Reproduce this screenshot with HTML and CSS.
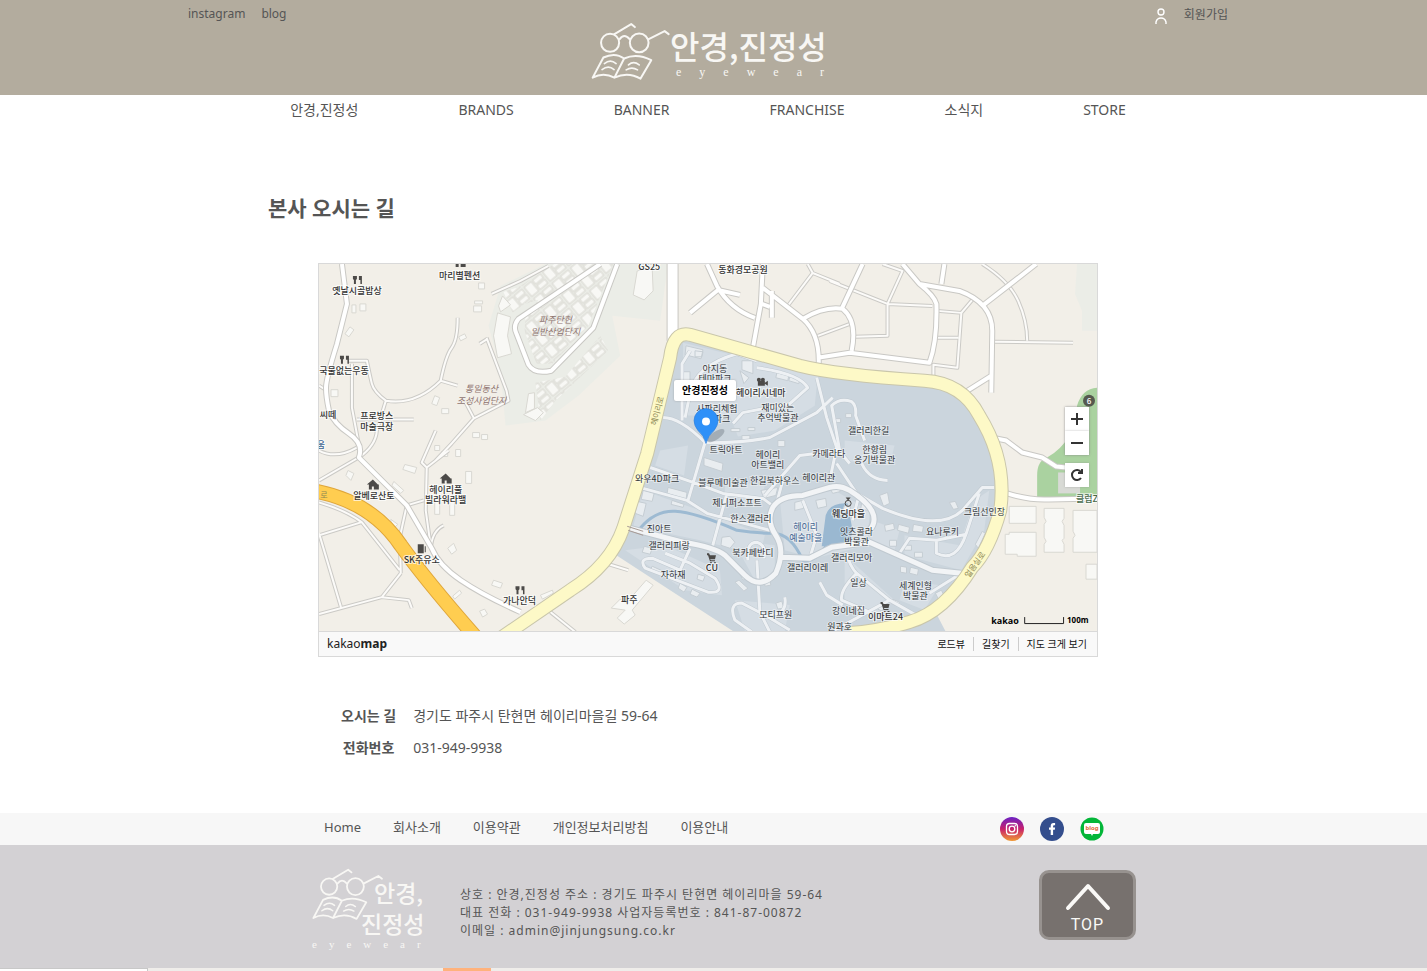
FILE: index.html
```html
<!DOCTYPE html>
<html lang="ko">
<head>
<meta charset="utf-8">
<meta name="viewport" content="width=device-width, initial-scale=1">
<title>안경,진정성 - 본사 오시는 길</title>
<link rel="stylesheet" href="styles.css">
</head>
<body>
<svg class="defs" aria-hidden="true">
  <symbol id="book-glasses" viewBox="90 60 245 185">
    <g fill="none" stroke="#f8f7f4" stroke-width="6" stroke-linecap="round" stroke-linejoin="round">
      <circle cx="150" cy="128" r="27"/><circle cx="237" cy="128" r="28"/>
      <path d="M178 118Q192 98 209 118M163 102 213 72 224 81M264 118 313 93 325 102"/>
      <path d="M98 232 130 172Q165 155 192 175Q230 158 273 180L241 235Q203 213 163 232Q130 215 98 232ZM192 175 163 232"/>
      <path stroke-width="5" d="M133 190Q151 176 168 190M126 208Q145 194 162 208M205 194Q220 181 237 194M198 209Q215 198 232 209"/>
    </g>
  </symbol>
</svg>

<header class="site-header">
  <div class="wrap header-row">
    <div class="top-links"><a href="#">instagram</a><a href="#">blog</a></div>
    <a class="logo" href="#" aria-label="안경, 진정성 eyewear">
      <svg width="236" height="62" viewBox="590 20 236 62">
        <use href="#book-glasses" x="590" y="20" width="82" height="62"/>
        <text class="logo-name" x="670" y="59">안경,진정성</text>
        <text class="logo-sub logo-sub-wide" x="676" y="76">eyewear</text>
      </svg>
    </a>
    <div class="member-links">
      <a href="#" aria-label="로그인"><svg width="14" height="18" viewBox="0 0 14 18" fill="none" stroke="#fff" stroke-width="1.4"><circle cx="7" cy="6" r="3"/><path d="M2 18v-2q1-4 5-4t5 4v2"/></svg></a>
      <a href="#">회원가입</a>
    </div>
  </div>
</header>
<nav class="main-nav">
  <a href="#">안경,진정성</a><a href="#">BRANDS</a><a href="#">BANNER</a><a href="#">FRANCHISE</a><a href="#">소식지</a><a href="#">STORE</a>
</nav>

<main class="content">
  <h1>본사 오시는 길</h1>
  <section class="map-box">
    <div class="map-view">
      <svg class="map" viewBox="318 263 780 368" role="img" aria-label="안경진정성 주변 지도">
        <defs>
          <pattern id="blocks" width="24" height="15" patternUnits="userSpaceOnUse" patternTransform="rotate(-40)">
            <rect class="bldg" x="1" y="1" width="9" height="12"/><rect class="bldg" x="12" y="1" width="10" height="5"/><rect class="bldg" x="12" y="8" width="10" height="5"/>
          </pattern>
          <g id="country">
            <path d="M348 360H366Q369 375 371 383T385 400Q415 405 440 380Q445 355 451 347T457 317M440 380 457 385M358 457Q375 445 376 430L385 400M351 363V407L360 455M356 419H413M486 337 506 390 508 400 473 418 451 443 435 460M479 343 487 338M465 402 473 417M435 430 421 462 426 467 425 510 430 546M448 450 426 467M400 573 399 537 406 505 423 500M400 573 381 597 318 614M381 597 408 600 411 608M318 535 360 522M318 502Q345 510 361 522L399 570M318 533 340 607M443 525Q432 530 430 547M318 480 356 458M318 450Q335 459 356 447M491 293 520 280 548 265M318 385 326 390M550 612 575 632M602 562 628 570"/>
            <path d="M983 263Q1010 280 1019 300T1028 340M995 341 1074 342M830 280 888 303 933 305M883 263 903 270 888 303V335L855 336M938 310 962 312 973 299M962 312 958 367 934 364V380M937 337H959M788 305 813 272 808 263M813 272 840 283M818 335 853 322"/>
          </g>
          <g id="avenues">
            <path d="M341 263 346 303 336 343Q325 378 325 387T328 410Q333 423 348 433T358 457L406 505 431 548Q438 565 460 580T520 612"/>
            <path d="M600 263 518 318Q512 325 516 333L528 364Q534 374 551 370L593 327 617 263"/>
            <path d="M707 263 717 285Q730 308 755 317M690 312 718 289 740 294M763 263 761 303 753 347M763 287 803 318Q820 333 819 363M762 303 770 306M772 290V317M803 318Q825 305 843 308Q858 320 852 350M818 357 850 352 930 362Q938 340 937 303Q935 295 920 283L903 263M920 283 960 290Q993 302 993 330L992 392M945 263 942 283M1037 263 983 305M863 263 842 308M992 375 965 392M997 438 1007 440 1023 452 1043 457 1057 466 1067 467M1008 493Q1030 500 1050 499L1098 498"/>
          </g>
          <g id="village">
            <path d="M682 420V363L690 350M663 417Q680 417 705 442Q740 443 770 437L817 412 833 397M685 417 690 393Q695 365 737 353L757 360M733 423 743 412 790 403 808 387Q800 373 757 367M817 377 827 417 837 447 830 480M705 442 688 500M650 467 693 482 723 493 763 498 775 507M643 488 687 500 707 513 770 530M727 493 712 548M837 463 857 493 883 508Q940 532 963 510L983 487H995M980 493 967 533Q957 563 937 553V540L967 534M900 553 910 538 938 540M962 573 930 593M665 553 690 563 715 578Q726 594 708 592L645 568Q638 558 652 558L680 570 690 548M748 560Q746 542 757 542Q767 545 764 558M757 560 760 612 770 632M752 632 735 620Q728 603 742 603L765 615 790 630M770 614Q788 615 785 597M820 582 827 595 843 605M847 553Q850 566 857 573L890 600 920 617M890 600 835 630M857 573Q840 590 842 600L870 612M837 447 850 463M858 500 853 520M840 450 832 405Q840 397 852 401Q857 405 856 415L865 440M862 463Q870 480 888 480M810 558 817 535 803 500M765 495 800 455 840 450M777 502 783 480"/>
          </g>
          <path id="ring" d="M870 530Q885 512 850 490Q840 484 830 487L803 495Q780 495 773 507Q766 520 776 535T776 573Q760 590 745 575L725 555Q715 547 683 542L630 528M782 557 810 558 832 547 870 542 933 570 962 573"/>
          <path id="yellow" d="M500 638 570 590Q610 565 623 528L647 453 670 357Q673 330 690 334L800 365Q835 374 925 380Q963 382 980 415Q1008 460 1001 510Q990 550 973 567Q945 612 910 622T850 633"/>
        </defs>
        <path fill="#f2efe8" d="M318 263h780v368H318z"/>
        <path fill="#ebede7" d="M545 263 500 285 488 325 500 370 505 425 545 420 578 395 620 355 612 315 660 320 668 263ZM1078 263h20v67h-15v-20l-7-17z"/>
        <path fill="url(#blocks)" d="M552 282 596 263H613L588 325 552 363H536L524 330 525 315ZM535 382 565 376 600 335 608 350 555 400 540 420ZM503 291 515 287 524 303 512 312ZM554 263H595L540 298 525 303 512 290Z"/>
        <path class="bldg" d="M497 312 510 316 507 335 511 353 497 357 493 335ZM502 295 510 304 500 311 498 305ZM528 393 534 392 534 408 525 412ZM637 270 652 266 653 290 644 299 633 294ZM523 414 535 420 543 412 537 407Z"/>
        <path class="bldg" d="M351 304h4v8h-4zM359 303h6v7h-6zM478 282h6v6h-6zM474 300h8v3h-8zM473 305h8v6h-8zM458 336l6-3 2 4-6 3zM344 333l5-7 4 3-5 7zM330 389h7v7h-7zM434 395l5 2-3 8-5-2zM441 408h7v5h-7zM472 432h7v5h-7zM481 434h6v5h-6zM455 449h5v7h-5zM434 445h5v5h-5zM441 451h6v5h-6zM404 464l12 3-2 6-12-4zM347 470l6 3-3 7-5-5zM393 481l10 9-3 3-9-8zM390 519l7 5-6 6zM465 471h6v12h-6zM434 501h5v13h-5zM449 500h5v15h-5zM447 548l6-5 3 7-5 4zM493 580l9 3-2 5-9-3zM452 596l7-6 2 3-7 6zM540 595l12-5 1 3-11 6zM479 611l5-2 3 5-5 3zM611 608l9-9 6 4 20-23 7 5-21 25 3 5-11 9-7-6 8-8z"/>
        <path class="bldg" d="M1010 506h27v17h-27zM1045 508h20v10l-2 3 2 4v13l-2 2 2 4v8h-20v-8l2-3-2-4v-13l2-3-2-4zM1074 510h24v42h-24v-14l2-3-2-4zM1006 534h4v-2h27v24h-19v-2h-12zM1087 564h11v15h-11z"/>
        <path fill="#aad2a0" d="M1098 387Q1083 388 1078 405Q1077 440 1048 457Q1038 460 1038 475V497H1098Z"/>
        <path fill="#d8dad5" d="M1059 472h22v21h-22z"/>

        <path fill="#cbd5dd" d="M675 340 690 335 800 365 925 380Q960 382 980 415Q1008 460 1001 510Q990 550 973 567L935 610 946 631H733L613 553 628 528 647 453Z"/>
        <path fill="#d5dde4" d="M683 342 740 356 818 375 815 405 775 430 738 436 730 415H683ZM660 450 688 445 684 475 655 465ZM780 498 835 490 870 510 868 545 815 558 785 550ZM643 490 700 510 765 535 760 555 700 540 633 526ZM625 550 665 545 720 570 722 595 685 590ZM872 520 900 530 895 550 870 545ZM905 535 960 545 975 500 990 490 985 530 962 570 905 555ZM733 540 775 545 775 575 755 580ZM845 555 895 600 880 615 845 600ZM735 600 790 605 785 631H745ZM845 440 895 445 890 465 845 460ZM725 480 765 485 760 505 725 500ZM905 580 940 585 925 610 900 600Z"/>
        <path fill="#9ab8d1" d="M826 515Q830 502 848 503L852 525Q855 548 835 545L822 546Z"/>
        <path fill="none" stroke="#9dbad2" stroke-width="3" d="M640 528Q655 510 675 511T737 530Q755 533 773 533T803 560Q815 563 826 546"/>
        <path class="vbldg" d="M686 345l17 4-2 9-16-4zM683 371h7v9h-7zM742 360h11v13l-11-4zM740 370l9 7-5 6zM695 350l8 1-1 5h-7zM777 372l12 3-1 5-12-3zM790 376l10 3-1 4-10-3zM731 428h9v3h-9zM748 427h7v3h-7zM778 440h7v6h-7zM833 418h8v4h-8zM846 413h6v4h-6zM704 457l19 6-1 8-18-6zM668 487l19 5-1 7-19-6zM643 490l11 3-2 8-11-2zM637 501l9 2-3 13-8-3zM672 500l12 4-1 3-12-3zM722 537l8-1 5 6-5 6-9-3zM742 435h8v4h-8zM761 490l17-3-2 8-12 3zM795 502l8-2 1 8-9 2zM816 500l10-2 1 8-9 2zM644 546l8 2-2 6-8-2zM652 566l11 5-2 4-11-5zM680 583l7 4-3 5-6-4zM692 589l8 4-3 4-7-3zM698 574l7 2-2 5-6-2zM740 574l5-3 3 6-5 3zM735 582l4-2 9 8-4 3zM765 580l5-1 1 6-6 1zM776 603l6-2 2 7-6 1zM885 525l9-2 1 6-9 2zM899 524l11 3-1 6-11-3zM914 524l10 2-1 6-10-1zM950 502l6-1 3 7-5 1zM880 495l8-3 2 11-6 3zM890 540h7v6h-7zM905 545h7v5h-7zM915 552h8v5h-8zM901 566l6 1v6l-6-1zM911 567l8 2-1 6-8-2zM976 544l7-13 3 2-7 15zM936 593l6-3 3 6-6 3zM862 503l8 1-1 6-8-1zM893 599l7 3-3 4-6-3zM880 604l5 1-2 6-5-2zM845 505l6 1-1 5-7-1zM830 487l8-1 3 5-8 2z"/>
        <use href="#village" class="v-case"/><use href="#village" class="v-fill"/>
        <use href="#ring" class="r-case"/><use href="#ring" class="r-fill"/>
        <use href="#country" class="c-case"/><use href="#country" class="c-fill"/>
        <use href="#avenues" class="a-case"/><use href="#avenues" class="a-fill"/>
        <path fill="none" stroke="#c9c7c2" stroke-width="12" d="M672.500 260V340"/>
        <path fill="none" stroke="#fff" stroke-width="10" d="M672.500 260V340"/>
        <use href="#yellow" class="y-case"/><use href="#yellow" class="y-fill"/>
        <path fill="none" stroke="#dfa63a" stroke-width="15" d="M310 490Q370 500 400 545Q425 580 475 637"/>
        <path fill="none" stroke="#ffcd50" stroke-width="13" d="M310 490Q370 500 400 545Q425 580 475 637"/>
        <path fill="none" stroke="#a79a94" d="M627 526 643 531M628 530 643 535"/>

        <g class="icons" fill="#4c4a48">
          <g id="fork"><path d="M352 275h4v3l-1 1v4h-2v-4l-1-1zM358 275h3v8h-1.500v-4H358z"/></g>
          <use href="#fork" x="-13" y="80"/><use href="#fork" x="163" y="311"/>
          <g id="inn"><path d="M439 478l6-5 5 5h-1v5h-3v-3h-2v3h-3v-5zM449 478h2v5h-2z"/></g>
          <use href="#inn" x="-73" y="6"/><use href="#inn" x="14" y="-217"/>
          <path d="M417 544h6v9h-6zM424 546h1v6h-1z"/>
          <circle cx="759" cy="379" r="2"/><circle cx="763" cy="379" r="2"/><path d="M758 380h7v5h-7zM765 382l3-2v5l-3-2z"/>
          <path d="M846 497h5l-2.500 3z"/>
          <circle cx="848.500" cy="503" r="3" fill="none" stroke="#4c4a48"/>
          <g id="cart"><path d="M707 553h2l1 2h6l-1 4h-5l1 1h4v1h-5l-2-6h-1zM710 562h2v1h-2zM714 562h2v1h-2z"/></g>
          <use href="#cart" x="174" y="49"/>
          <circle cx="1090" cy="400" r="6" fill="#55594f"/>
        </g>
        <g class="labels">
          <text x="356" y="293">옛날시골밥상</text><text x="459" y="278">마리별펜션</text>
          <text x="343" y="373">국물없는우동</text><text x="327" y="417">씨떼</text>
          <text x="376" y="418">프로방스</text><text x="376" y="429">마술극장</text>
          <text x="373" y="499">알베로산토</text><text x="445" y="493">헤이리풀</text><text x="445" y="503">빌라워라밸</text>
          <text x="421" y="563">SK주유소</text><text x="519" y="604">가나안덕</text>
          <text x="649" y="269">GS25</text><text x="743" y="272">동화경모공원</text><text x="629" y="603">파주</text>
          <text x="761" y="395">헤이리시네마</text><text x="849" y="517">웨딩마을</text><text x="712" y="571">CU</text><text x="886" y="620">이마트24</text>
          <text class="num" x="1090" y="403">6</text><text class="park" x="1088" y="502">클럽Z</text>
          <text class="place" x="320" y="447">움</text>
        </g>
        <g class="labels village-labels">
          <text x="715" y="371">아지동</text><text x="715" y="381">테마파크</text><text x="717" y="411">사파리체험</text><text x="722" y="421">파크</text>
          <text x="778" y="410">재미있는</text><text x="778" y="420">추억박물관</text><text x="726" y="453">트릭아트</text>
          <text x="768" y="458">헤이리</text><text x="768" y="468">아트밸리</text><text x="829" y="457">카메라타</text><text x="869" y="433">갤러리한길</text>
          <text x="875" y="453">한향림</text><text x="875" y="463">옹기박물관</text><text x="657" y="482">와우4D파크</text>
          <text x="723" y="486">블루메미술관</text><text x="775" y="484">한길북하우스</text><text x="819" y="481">헤이리관</text>
          <text x="737" y="506">제니퍼소프트</text><text x="751" y="522">한스갤러리</text><text x="659" y="532">진아트</text>
          <text x="669" y="549">갤러리피랑</text><text x="753" y="556">북카페반디</text><text x="673" y="578">자하재</text>
          <text x="808" y="571">갤러리이레</text><text x="852" y="561">갤러리모아</text><text x="857" y="535">잇츠콜라</text><text x="857" y="545">박물관</text>
          <text x="985" y="515">크림선인장</text><text x="943" y="535">요나루키</text><text x="859" y="586">일상</text>
          <text x="916" y="589">세계인형</text><text x="916" y="599">박물관</text><text x="776" y="618">모티프원</text>
          <text x="849" y="614">강이네집</text><text x="840" y="630">원과호</text>
          <text class="place" x="806" y="530">헤이리</text><text class="place" x="806" y="541">예술마을</text>
        </g>
        <g class="areas">
          <text x="555" y="322">파주탄현</text><text x="555" y="334">일반산업단지</text>
          <text x="481" y="391">통일동산</text><text x="481" y="403">조성사업단지</text>
        </g>
        <g class="roads">
          <text transform="translate(660 411) rotate(-75)">헤이리로</text><text transform="translate(978 566) rotate(-55)">얼음실로</text><text transform="translate(323 498)">로</text>
        </g>
        <text class="kakao" x="992" y="624">kakao</text>
        <path fill="none" stroke="#222" d="M1025.500 617v6.500h39V617"/>
        <text class="scale" x="1068" y="623">100m</text>

        <ellipse cx="716" cy="435" rx="10" ry="4" transform="rotate(-35 716 435)" fill="#59636d" opacity=".35"/>
        <path fill="#2e90f8" stroke="#2579d8" stroke-width=".6" d="M706 443Q704 435 698 430Q694 425 694 420A12 12 0 0 1 718 420Q718 425 714 430Q708 435 706 443Z"/>
        <circle cx="706" cy="421" r="4" fill="#fff"/>
      </svg>
      <div class="info-window">안경진정성</div>
      <div class="map-tools">
        <div class="zoom-tools">
          <button type="button" aria-label="확대"><svg width="12" height="12"><path d="M6 0v12M0 6h12"/></svg></button>
          <button type="button" aria-label="축소"><svg width="12" height="12"><path d="M0 6h12"/></svg></button>
        </div>
        <button type="button" aria-label="새로고침"><svg width="14" height="14"><path d="M11 10A5 5 0 1 1 11 4M12 1v4H8"/></svg></button>
      </div>
    </div>
    <div class="map-bar">
      <a class="kakaomap" href="#">kakao<b>map</b></a>
      <div class="map-links"><a href="#">로드뷰</a><a href="#">길찾기</a><a href="#">지도 크게 보기</a></div>
    </div>
  </section>
  <dl class="contact">
    <dt>오시는 길</dt><dd>경기도 파주시 탄현면 헤이리마을길 59-64</dd>
    <dt>전화번호</dt><dd>031-949-9938</dd>
  </dl>
</main>

<footer>
  <div class="footer-nav">
    <div class="footer-nav-row">
      <nav class="policy"><a href="#">Home</a><a href="#">회사소개</a><a href="#">이용약관</a><a href="#">개인정보처리방침</a><a href="#">이용안내</a></nav>
      <div class="social">
        <a href="#" aria-label="Instagram"><svg width="24" height="24" viewBox="0 0 24 24"><defs><linearGradient id="ig" x2="0" y2="1"><stop stop-color="#6b22c5"/><stop offset=".5" stop-color="#c8206c"/><stop offset="1" stop-color="#f09a33"/></linearGradient></defs><circle cx="12" cy="12" r="12" fill="url(#ig)"/><g fill="none" stroke="#fff" stroke-width="1.300"><rect x="6.500" y="6.500" width="11" height="11" rx="3"/><circle cx="12" cy="12" r="2.800"/></g><circle cx="15.300" cy="8.800" r=".8" fill="#fff"/></svg></a>
        <a href="#" aria-label="Facebook"><svg width="24" height="24" viewBox="0 0 24 24"><circle cx="12" cy="12" r="12" fill="#344e8d"/><path fill="#fff" d="M10.700 18v-5.200H9v-2.300h1.700V9q0-3 2.800-3h1.600v2.200H14q-.9 0-.9 1v1.300h2l-.3 2.300h-1.700V18z"/></svg></a>
        <a href="#" aria-label="Blog"><svg width="24" height="24" viewBox="0 0 24 24"><circle cx="12" cy="12" r="11.500" fill="#03b639"/><path fill="#fff" d="M6 6h12q2 0 2 2v7q0 2-2 2h-5l-1 2-1-2H6q-2 0-2-2V8q0-2 2-2z"/><text class="blog-text" x="12" y="13">blog</text></svg></a>
      </div>
    </div>
  </div>
  <div class="footer-info">
    <div class="footer-row">
      <svg class="footer-logo" width="114" height="84" viewBox="311 867 114 84" role="img" aria-label="안경, 진정성 eyewear">
        <use href="#book-glasses" x="311" y="866" width="74" height="56"/>
        <text class="logo-name logo-name-small" x="374" y="902">안경,</text>
        <text class="logo-name logo-name-small" x="361" y="933">진정성</text>
        <text class="logo-sub logo-sub-small" x="312" y="948">eyewear</text>
      </svg>
      <address>상호 : 안경,진정성 주소 : 경기도 파주시 탄현면 헤이리마을 59-64<br>대표 전화 : 031-949-9938 사업자등록번호 : 841-87-00872<br>이메일 : admin@jinjungsung.co.kr</address>
      <a class="top-button" href="#"><svg width="46" height="28" viewBox="0 0 46 28"><path d="M3 25 23 3 43 25" fill="none" stroke="#faf9f7" stroke-width="4" stroke-linecap="round" stroke-linejoin="round"/></svg><span>TOP</span></a>
    </div>
  </div>
  <div class="end-strip"><span class="status"></span><span class="marker"></span></div>
</footer>
</body>
</html>
```
FILE: styles.css
```css
* { box-sizing: border-box; }
body {
  margin: 0;
  background: #fff;
  color: #555;
  font: 14px/20px "Noto Sans", "Noto Sans CJK KR", sans-serif;
}
a { color: inherit; text-decoration: none; }
svg { display: block; }
.defs { position: absolute; width: 0; height: 0; }

.site-header { background: #b3ac9e; padding-right: 11px; }
.wrap { max-width: 1040px; margin: 0 auto; }
.header-row {
  display: grid;
  grid-template-columns: 1fr auto 1fr;
  align-items: start;
  min-height: 95px;
  font-size: 12px;
}
.top-links { display: flex; gap: 16px; padding-top: 4px; }
.member-links { display: flex; gap: 16px; justify-content: flex-end; align-items: center; padding-top: 6px; line-height: 18px; }
.logo { padding-top: 20px; }
.logo svg, .footer-logo { overflow: visible; }
.logo-name { font: 500 32px "Noto Sans CJK KR", sans-serif; fill: #f8f7f4; }
.logo-name-small { font-size: 23px; }
.logo-sub { font: 12px "Liberation Serif", serif; fill: #f8f7f4; }
.logo-sub-wide { letter-spacing: 18px; }
.logo-sub-small { letter-spacing: 12px; font-size: 11px; }

.main-nav {
  display: flex;
  justify-content: center;
  flex-wrap: wrap;
  column-gap: 100px;
  padding: 5px 11px 5px 0;
}

.content { padding-right: 11px; }
h1 {
  max-width: 880px;
  margin: 69px auto 41px;
  font-size: 21px;
  line-height: 28px;
}
.map-box { max-width: 780px; margin: 0 auto; border: 1px solid #d9d9d9; }
.map-view { position: relative; border-bottom: 1px solid #d9d9d9; }
.map { width: 100%; height: auto; }
.map text { font-family: "Noto Sans CJK KR", sans-serif; }
.bldg { fill: #f8f8f5; stroke: #d9d8d2; stroke-width: 1; }
.vbldg { fill: #e9edf0; stroke: #c5cdd3; stroke-width: 1; }
.c-case, .a-case, .v-case, .r-case, .y-case,
.c-fill, .a-fill, .v-fill, .r-fill, .y-fill { fill: none; stroke-linejoin: round; }
.c-case { stroke: #cbcac6; stroke-width: 4; }
.c-fill { stroke: #fcfbf9; stroke-width: 2; }
.a-case { stroke: #c9c8c4; stroke-width: 6; }
.a-fill { stroke: #fff; stroke-width: 4; }
.v-case { stroke: #c0c9d0; stroke-width: 4; }
.v-fill { stroke: #eef1f4; stroke-width: 3; }
.r-case { stroke: #c0c9d0; stroke-width: 7; }
.r-fill { stroke: #f2f4f6; stroke-width: 5; }
.y-case { stroke: #c9c6ab; stroke-width: 14; }
.y-fill { stroke: #fdf9c7; stroke-width: 12; }
.labels text {
  font-size: 9px;
  font-weight: 500;
  fill: #333;
  text-anchor: middle;
  stroke: #fff;
  stroke-opacity: .7;
  stroke-width: 2;
  paint-order: stroke;
}
.village-labels text { font-weight: 400; fill: #33373a; stroke-opacity: .4; }
.labels .num { fill: #fff; stroke: none; font-size: 8px; }
.labels .park { fill: #47694a; }
.labels .place { fill: #3f6390; }
.areas text { font-size: 9px; font-style: italic; fill: #8f7470; text-anchor: middle; }
.roads text { font-size: 8px; fill: #8b8753; text-anchor: middle; }
.map .kakao { font: bold 9px "Open Sans", sans-serif; }
.map .scale { font: bold 8px "Noto Sans", sans-serif; }
.info-window {
  position: absolute;
  left: 355px;
  top: 116px;
  padding: 1px 8px 2px;
  border-radius: 2px;
  background: #fff;
  box-shadow: 0 0 2px #7778;
  color: #000;
  font: bold 10px/18px "Noto Sans CJK KR", sans-serif;
}
.map-tools { position: absolute; right: 8px; top: 143px; display: grid; gap: 8px; }
.zoom-tools { display: grid; box-shadow: 0 0 2px #8888; }
.map-tools button {
  display: grid;
  place-items: center;
  width: 24px;
  height: 24px;
  padding: 0;
  border: 0;
  background: #fff;
  box-shadow: 0 0 2px #8888;
}
.map-tools path { fill: none; stroke: #333; stroke-width: 2; }
.map-bar {
  display: flex;
  justify-content: space-between;
  align-items: center;
  padding: 0 10px 0 8px;
  background: #f9f9f9;
  color: #111;
  line-height: 24px;
}
.kakaomap { font-size: 12px; color: #222; }
.map-links { display: flex; font-size: 10px; }
.map-links a + a::before { content: ""; border-left: 1px solid #ccc; margin: 0 8px; }

.contact {
  display: grid;
  grid-template-columns: auto 1fr;
  gap: 12px 17px;
  max-width: 734px;
  margin: 49px auto 55px;
  line-height: 20px;
}
.contact dt { font-weight: bold; text-align: center; }
.contact dd { margin: 0; }

.footer-nav { background: #f7f7f7; padding-right: 11px; }
.footer-nav-row { display: flex; justify-content: space-between; align-items: center; max-width: 792px; margin: 0 auto; padding-left: 12px; min-height: 32px; }
.policy { display: flex; flex-wrap: wrap; gap: 32px; font-size: 13px; line-height: 28px; padding-bottom: 4px; }
.social { display: flex; gap: 16px; }
.blog-text { font: bold 6px "Noto Sans", sans-serif; fill: #e06a3a; text-anchor: middle; }
.footer-info { background: #d3d1d4; padding-right: 11px; }
.footer-row { display: flex; align-items: flex-start; max-width: 856px; margin: 0 auto; padding: 22px 0 17px 31px; }
.footer-row address { padding: 19px 0 0 35px; font-size: 12px; font-style: normal; line-height: 18px; letter-spacing: 1px; }
.top-button {
  display: grid;
  justify-items: center;
  align-content: start;
  gap: 2px;
  width: 97px;
  height: 70px;
  margin: 3px 0 0 auto;
  padding-top: 10px;
  border: 3px solid #97928f;
  border-radius: 10px;
  background: #77716e;
  color: #faf9f7;
  font: 16px/24px Roboto, sans-serif;
  letter-spacing: 1px;
}
.end-strip { display: flex; gap: 295px; height: 3px; background: #efedea; }
.status { width: 148px; background: #fff; border: solid #c8c8c8; border-width: 1px 1px 0 0; }
.marker { width: 48px; background: #ffb27c; }
```
